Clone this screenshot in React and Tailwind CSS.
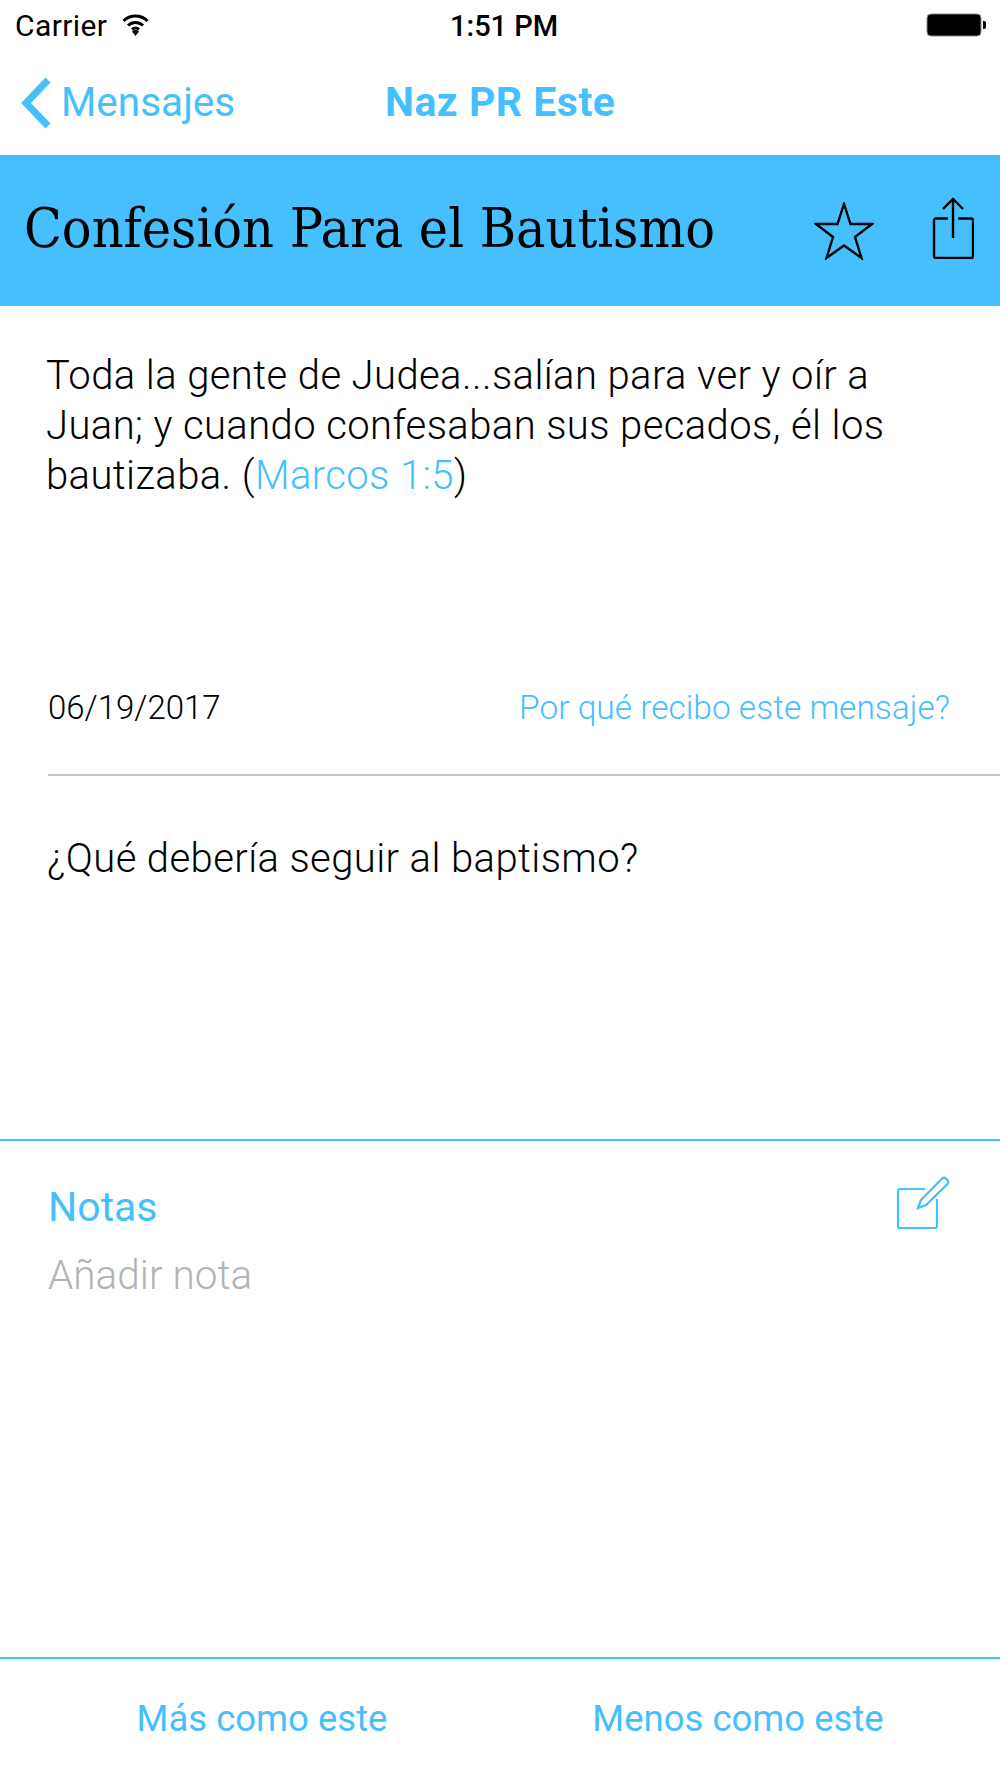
export default function App() {
  return (
    <div className="w-[1000px] h-[1778px] bg-white flex flex-col overflow-hidden font-['Roboto',sans-serif] font-light text-black">
      <div className="h-[50px] flex items-center justify-between relative pl-[15px] pr-[12px] text-[30px] tracking-[0.4px] font-normal">
        <div className="flex items-center gap-[13px]">
          <span>Carrier</span>
          <svg width="31" height="24" viewBox="0 0 30 24"><path d="M3 8 A17 17 0 0 1 27 8 M7.5 12.5 A11 11 0 0 1 22.5 12.5 M11.5 16.5 A5.5 5.5 0 0 1 18.5 16.5" fill="none" stroke="#000" strokeWidth="3"/><path d="M15 23 L11.5 18.5 A5 5 0 0 1 18.5 18.5Z" fill="#000"/></svg>
        </div>
        <span className="absolute left-[450px] top-[9px] font-medium text-[29px] leading-[34px] tracking-normal">1:51 PM</span>
        <svg width="62" height="26" viewBox="0 0 62 26"><rect x="1" y="2" width="54" height="22" rx="4" fill="#000" stroke="#888" strokeWidth="1"/><path d="M57 9 h1 a2 2 0 0 1 2 2 v4 a2 2 0 0 1 -2 2 h-1z" fill="#000"/></svg>
      </div>
      <div className="h-[105px] flex items-center relative text-[#46bfff] text-[40.5px] font-normal">
        <svg className="ml-[20px]" width="34" height="52" viewBox="0 0 34 52"><path d="M28 3 L6 26 L28 49" fill="none" stroke="#46bfff" strokeWidth="7"/></svg>
        <span className="ml-[7px]">Mensajes</span>
        <span className="absolute left-[385px] font-bold text-[41px] tracking-[0.5px]">Naz PR Este</span>
      </div>
      <div className="h-[151px] bg-[#46bfff] flex items-center justify-between pl-[24px] pr-[26px]">
        <span className="font-['DejaVu_Serif_Condensed','DejaVu_Serif',serif] text-[55px] font-normal -mt-[4px]">Confesión Para el Bautismo</span>
        <div className="flex items-center gap-[58px]">
          <svg width="60" height="58" viewBox="0 0 60 58"><path d="M30 2 L36.5 22 L58 22 L41 35 L47.5 56 L30 43.5 L12.5 56 L19 35 L2 22 L23.5 22Z" fill="none" stroke="#000" strokeWidth="2.4"/></svg>
          <svg className="-mt-[5px]" width="42" height="62" viewBox="0 0 42 62"><path d="M16 21.5 H4 Q2 21.5 2 23.5 V59 Q2 61 4 61 H39 Q41 61 41 59 V23.5 Q41 21.5 39 21.5 H26 M21 41 V2 M11 12 L21 2 L31 12" fill="none" stroke="#000" strokeWidth="2.4"/></svg>
        </div>
      </div>
      <div className="pl-[46px] pr-[90px] pt-[45px] text-[40px] tracking-[0.4px] leading-[50px] h-[379px]">
        Toda la gente de Judea...salían para ver y oír a <br />Juan; y cuando confesaban sus pecados, él los <br />bautizaba. (<span className="text-[#46bfff]">Marcos 1:5</span>)
      </div>
      <div className="flex items-center justify-between pl-[48px] pr-[50px] h-[50px] -mt-[2px]">
        <span className="text-[33px]">06/19/2017</span>
        <span className="text-[#46bfff] text-[33.5px]">Por qué recibo este mensaje?</span>
      </div>
      <div className="ml-[48px] mt-[41px] h-[2px] bg-[#c8c8c8]" />
      <div className="pl-[47px] pt-[58px] h-[363px] text-[40px] tracking-[0.4px] leading-[50px]">¿Qué debería seguir al baptismo?</div>
      <div className="h-[2px] bg-[#46bfff]" />
      <div className="h-[516px] flex flex-col">
        <div className="flex items-center justify-between pl-[48px] pr-[49px] pt-[41px]">
          <span className="text-[#46bfff] text-[41px] leading-[50px] font-normal">Notas</span>
          <svg className="-mt-[8px]" width="56" height="56" viewBox="0 0 56 56"><path d="M30 14 H5 Q3 14 3 16 V51 Q3 53 5 53 H40 Q42 53 42 51 V24" fill="none" stroke="#46bfff" strokeWidth="2.2"/><path d="M23 33 L26 25 L47 3.5 Q49 2 51 3.5 L52.5 5 Q54 7 52.5 9 L31 30Z" fill="none" stroke="#46bfff" strokeWidth="2.2"/></svg>
        </div>
        <div className="pl-[48px] pt-[18px] text-[40.5px] leading-[50px] text-[#b3b3b3]">Añadir nota</div>
      </div>
      <div className="h-[2px] bg-[#46bfff]" />
      <div className="flex-1 grid grid-cols-2 text-[#46bfff] text-[36.5px] font-normal pt-[2px]">
        <div className="flex items-center justify-center pl-[24px]">Más como este</div>
        <div className="flex items-center justify-center pr-[24px]">Menos como este</div>
      </div>
    </div>
  );
}
